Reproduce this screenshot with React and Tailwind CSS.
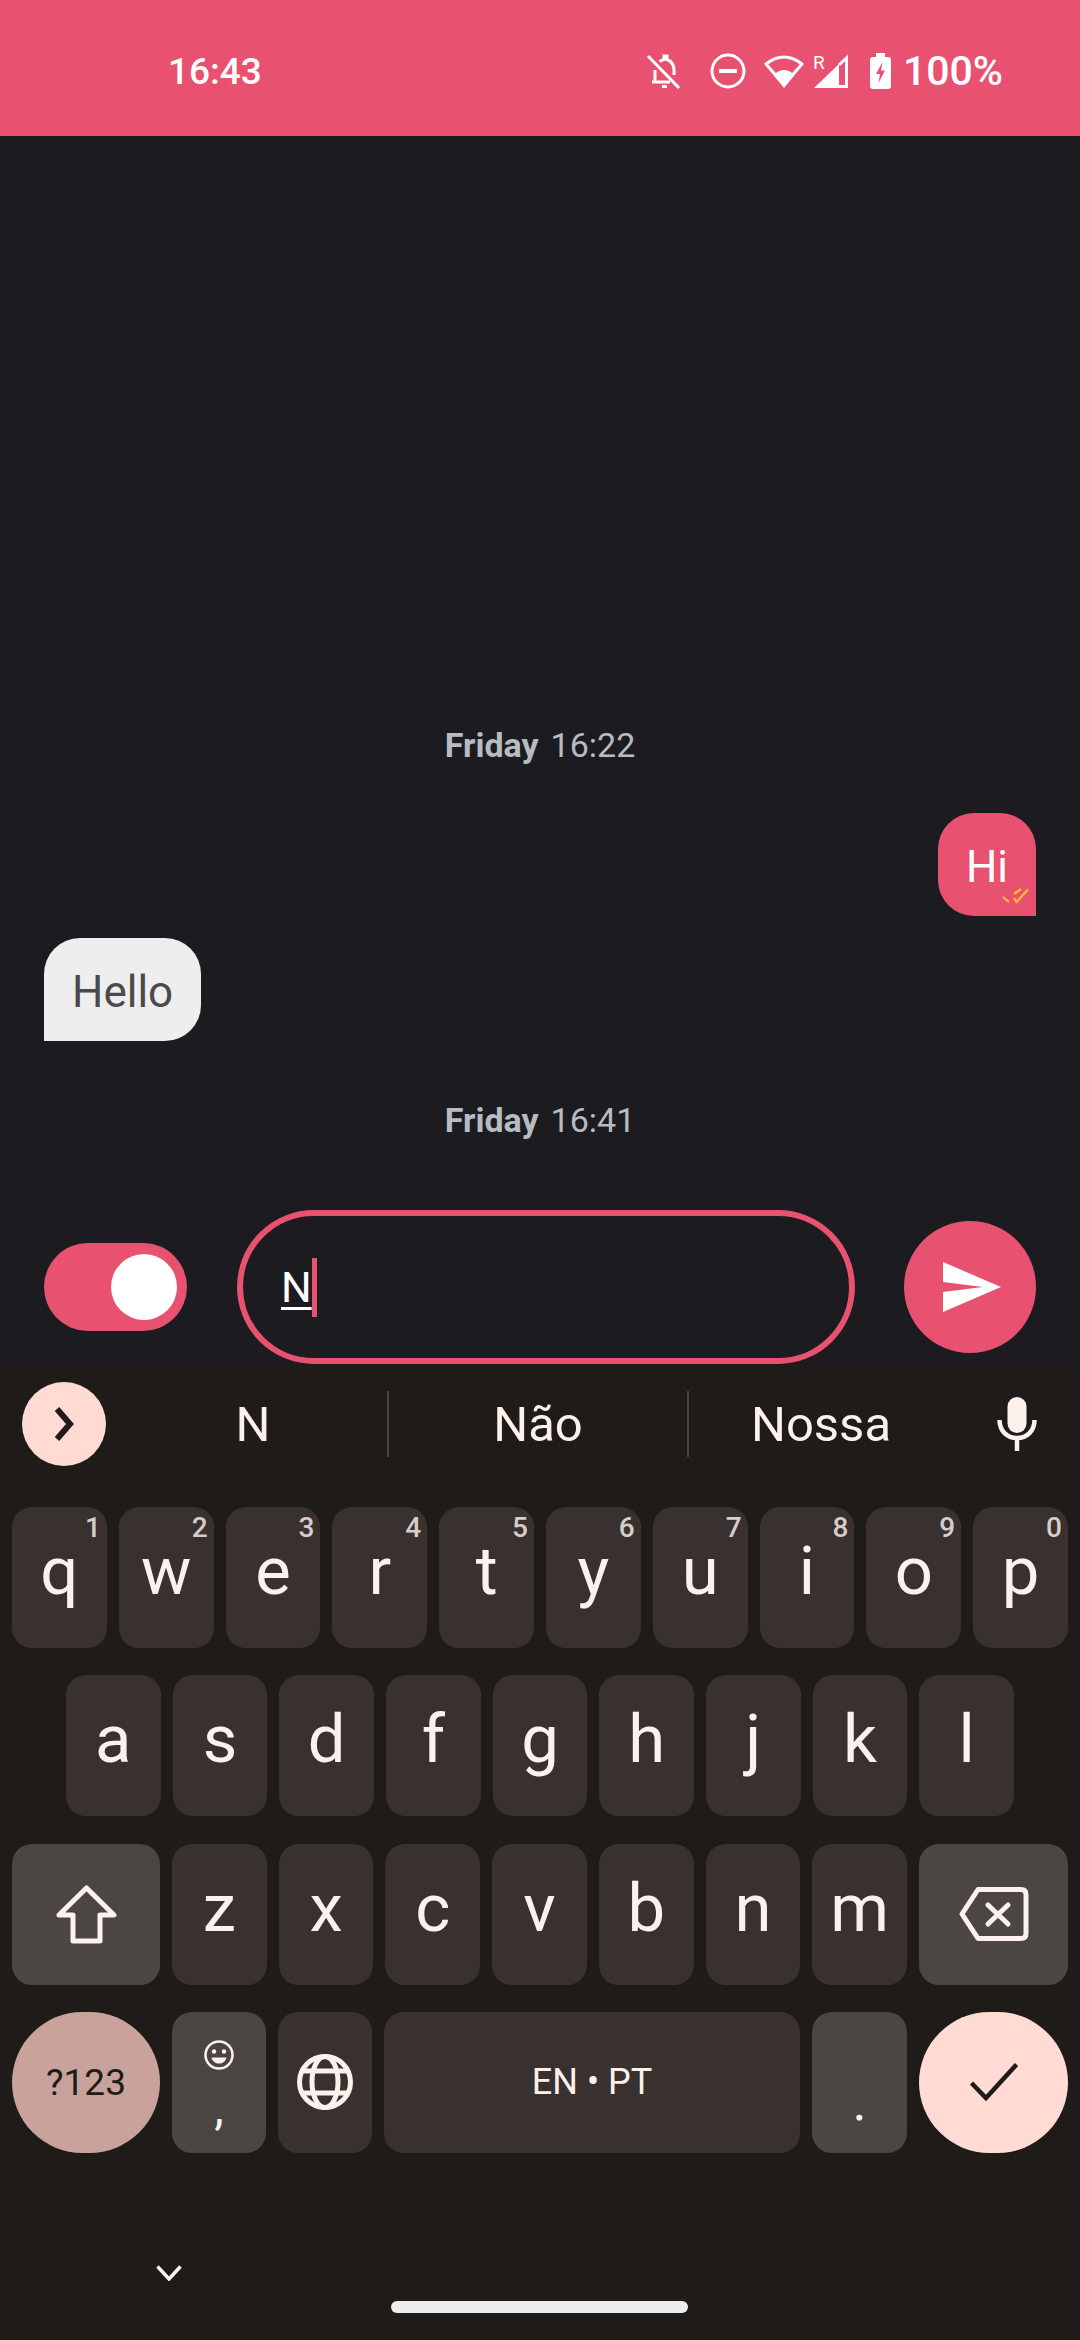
import React from "react";

const ROW_ONE = [["q", "1"], ["w", "2"], ["e", "3"], ["r", "4"], ["t", "5"], ["y", "6"], ["u", "7"], ["i", "8"], ["o", "9"], ["p", "0"]];
const ROW_TWO = ["a", "s", "d", "f", "g", "h", "j", "k", "l"];
const ROW_THREE = ["z", "x", "c", "v", "b", "n", "m"];

const Key = ({ label, digit }) => (
  <div className="relative flex-1 h-full rounded-[20px] bg-[#383130] flex items-center justify-center pb-[12px] text-[67px] font-normal leading-none text-[#fdf1ec]">
    {label}
    {digit && <span className="absolute top-[7px] right-[6px] text-[28px] font-medium leading-[28px] text-[#d6cdca]">{digit}</span>}
  </div>
);

const BellOff = () => (
  <svg width="35" height="35" viewBox="0 0 35 35" fill="none" stroke="white" strokeWidth="3">
    <path d="M2 2 L33 34" />
    <path d="M6 28 H24" />
    <path d="M9 28 V16" />
    <path d="M28 21 V16 C28 11 25 7 21 5.5 V2 H18 V5.5 C16 6 15 6.5 13.5 7.5" />
    <path d="M16 32.5 H21" />
  </svg>
);

const Dnd = () => (
  <svg width="36" height="36" viewBox="0 0 36 36" fill="none" stroke="white" strokeWidth="3" className="ml-[29px]">
    <circle cx="18" cy="18" r="16" />
    <path d="M9 18 H27" strokeWidth="4" />
  </svg>
);

const Wifi = () => (
  <svg width="42" height="36" viewBox="0 0 42 36" fill="none" stroke="white" strokeWidth="3" className="ml-[17px]">
    <path d="M3 11 Q21 -3 39 11 L21 32 Z" strokeLinejoin="round" />
    <path d="M10.5 22 Q21 12 31.5 22 L21 35 Z" fill="white" stroke="none" />
  </svg>
);

const Signal = () => (
  <div className="relative ml-[9px]">
    <svg width="35" height="35" viewBox="0 0 35 35" fill="none" className="block">
      <path d="M0 34 L25 10 V34 Z" fill="white" />
      <path d="M25 32.5 H32.5 V4 L25 11" stroke="white" strokeWidth="3" />
    </svg>
    <span className="absolute -left-[1px] top-[-1px] text-[19px] leading-[19px] text-white">R</span>
  </div>
);

const Battery = () => (
  <svg width="21" height="36" viewBox="0 0 21 36" className="ml-[21px]">
    <path d="M6 0 H15 V4 H18 Q21 4 21 7 V33 Q21 36 18 36 H3 Q0 36 0 33 V7 Q0 4 3 4 H6 Z" fill="white" />
    <path d="M12.5 9 L6 21 H10 L8.5 30 L15 17.5 H11 Z" fill="#e95170" />
  </svg>
);

const Ticks = () => (
  <svg width="27" height="16" viewBox="0 0 27 16" fill="none" stroke="#fbc02d" strokeWidth="2.2" className="absolute right-[7px] bottom-[12px]">
    <path d="M1 9 L7 14" />
    <path d="M12 10 L14.5 14 L26 1.5" />
    <path d="M12 6 L19 1" />
  </svg>
);

export default function App() {
  return (
    <div className="w-[1080px] h-[2340px] flex flex-col bg-[#1c1c20] overflow-hidden font-['Roboto',sans-serif]">
      {/* status bar */}
      <div className="h-[136px] shrink-0 bg-[#e95170] flex items-center pl-[168px] pr-[77px] pt-[6px] text-white">
        <span className="text-[37px] font-medium leading-none">16:43</span>
        <div className="ml-auto flex items-center">
          <BellOff />
          <Dnd />
          <Wifi />
          <Signal />
          <Battery />
          <span className="ml-[12px] text-[41px] font-medium leading-none">100%</span>
        </div>
      </div>

      {/* messages */}
      <div className="flex-1 flex flex-col justify-end pb-[70px] px-[44px]">
        <div className="h-[40px] flex items-center justify-center text-[34px] text-[#b6bcc2] leading-none">
          <span className="font-bold mr-[12px]">Friday</span>
          <span>16:22</span>
        </div>
        <div className="relative mt-[48px] self-end h-[103px] px-[28px] pt-[5px] flex items-center rounded-[36px] rounded-br-none bg-[#e95170] text-[44px] text-white">
          Hi
          <Ticks />
        </div>
        <div className="mt-[22px] self-start h-[103px] px-[28px] pt-[5px] flex items-center rounded-[36px] rounded-bl-none bg-[#eeeeee] text-[44px] text-[#4a4a4a]">
          Hello
        </div>
        <div className="mt-[59px] h-[40px] flex items-center justify-center text-[34px] text-[#b6bcc2] leading-none">
          <span className="font-bold mr-[12px]">Friday</span>
          <span>16:41</span>
        </div>
      </div>

      {/* input row */}
      <div className="h-[154px] shrink-0 flex items-center pl-[44px]">
        <div className="w-[143px] h-[88px] rounded-full bg-[#e95170] flex items-center justify-end pr-[10px]">
          <div className="w-[66px] h-[66px] rounded-full bg-white" />
        </div>
        <div className="ml-[50px] w-[618px] h-[154px] rounded-full border-[6px] border-[#e95170] flex items-center pl-[38px] text-[43px] text-white">
          <span className="underline decoration-[3px] underline-offset-[5px]">N</span>
          <span className="w-[5px] h-[59px] bg-[#e95170]" />
        </div>
        <div className="ml-[49px] w-[132px] h-[132px] rounded-full bg-[#e95170] flex items-center justify-center pl-[4px]">
          <svg width="58" height="50" viewBox="0 0 58 50">
            <path d="M0 0 L58 25 L0 50 V30 L40 25 L0 20 Z" fill="white" />
          </svg>
        </div>
      </div>

      {/* keyboard */}
      <div className="h-[976px] shrink-0 bg-[#1f1b18] text-[#fdf1ec]">
        <div className="h-[143px] flex items-start pt-[18px] pl-[22px]">
          <div className="w-[84px] h-[84px] rounded-full bg-[#ffdbd3] flex items-center justify-center">
            <svg width="20" height="34" viewBox="0 0 20 34" fill="none" stroke="#1f1b18" strokeWidth="6">
              <path d="M3 2 L16 17 L3 32" />
            </svg>
          </div>
          <div className="ml-[13px] w-[268px] h-[84px] flex items-center justify-center text-[49px] leading-none">N</div>
          <div className="w-[2px] h-[66px] mt-[9px] bg-[#484442]" />
          <div className="w-[298px] h-[84px] flex items-center justify-center text-[49px] leading-none">Não</div>
          <div className="w-[2px] h-[66px] mt-[9px] bg-[#484442]" />
          <div className="w-[264px] h-[84px] flex items-center justify-center text-[49px] leading-none">Nossa</div>
          <svg width="40" height="54" viewBox="0 0 40 54" fill="none" className="ml-[44px] mt-[15px]">
            <rect x="10.5" y="0" width="19" height="36" rx="9.5" fill="#fdf1ec" />
            <path d="M2.5 23 C2.5 34 10 41 20 41 C30 41 37.5 34 37.5 23" stroke="#fdf1ec" strokeWidth="4.5" />
            <path d="M20 40 V54" stroke="#fdf1ec" strokeWidth="4.5" />
          </svg>
        </div>

        <div className="flex flex-col gap-[27.3px]">
          <div className="h-[141px] flex gap-[12px] px-[12px]">
            {ROW_ONE.map(([label, digit]) => (
              <Key key={label} label={label} digit={digit} />
            ))}
          </div>
          <div className="h-[141px] flex gap-[12px] px-[66px]">
            {ROW_TWO.map((label) => (
              <Key key={label} label={label} />
            ))}
          </div>
          <div className="h-[141px] flex gap-[12px] px-[12px]">
            <div className="w-[148px] rounded-[20px] bg-[#4b4543] flex items-center justify-center">
              <svg width="61" height="59" viewBox="0 0 61 59" fill="none" stroke="#fdf1ec" strokeWidth="5" strokeLinejoin="round">
                <path d="M30.5 3 L58 30 H44 V56 H17 V30 H3 Z" />
              </svg>
            </div>
            {ROW_THREE.map((label) => (
              <Key key={label} label={label} />
            ))}
            <div className="w-[149px] rounded-[20px] bg-[#4b4543] flex items-center justify-center">
              <svg width="70" height="54" viewBox="0 0 70 54" fill="none" stroke="#fdf1ec" strokeWidth="5" strokeLinejoin="round" strokeLinecap="round">
                <path d="M3 27 L19 2.5 H62 Q67 2.5 67 7.5 V46.5 Q67 51.5 62 51.5 H19 Z" />
                <path d="M29 18 L49 37 M49 18 L29 37" />
              </svg>
            </div>
          </div>
          <div className="h-[141px] flex gap-[12px] px-[12px]">
            <div className="w-[148px] rounded-full bg-[#c9a39b] flex items-center justify-center text-[37px] font-normal leading-none text-[#1f1b18]">?123</div>
            <div className="w-[94px] rounded-[20px] bg-[#4b4543] flex flex-col items-center pt-[28px]">
              <svg width="30" height="30" viewBox="0 0 30 30" fill="none">
                <circle cx="15" cy="15" r="13.5" stroke="#fdf1ec" strokeWidth="2.5" />
                <circle cx="10" cy="11.5" r="2.2" fill="#fdf1ec" />
                <circle cx="20" cy="11.5" r="2.2" fill="#fdf1ec" />
                <path d="M7.5 17.5 H22.5 C21.5 21.5 18.5 23.5 15 23.5 C11.5 23.5 8.5 21.5 7.5 17.5 Z" fill="#fdf1ec" />
              </svg>
              <span className="mt-[14px] text-[48px] leading-[48px]">,</span>
            </div>
            <div className="w-[94px] rounded-[20px] bg-[#383130] flex items-center justify-center">
              <svg width="56" height="56" viewBox="0 0 56 56" fill="none" stroke="#fdf1ec" strokeWidth="5">
                <circle cx="28" cy="28" r="25.5" />
                <ellipse cx="28" cy="28" rx="13" ry="25.5" />
                <path d="M5 17 H51 M5 39 H51" />
              </svg>
            </div>
            <div className="flex-1 rounded-[20px] bg-[#383130] flex items-center justify-center text-[36px] leading-none">EN • PT</div>
            <div className="w-[95px] rounded-[20px] bg-[#4b4543] flex items-center justify-center pt-[40px] text-[54px] leading-[54px]">.</div>
            <div className="w-[149px] rounded-full bg-[#ffdbd3] flex items-center justify-center">
              <svg width="48" height="38" viewBox="0 0 48 38" fill="none" stroke="#1f1b18" strokeWidth="4.5">
                <path d="M1.5 20 L16 35 L46.5 1.5" />
              </svg>
            </div>
          </div>
        </div>

        {/* nav */}
        <div className="mt-[112px] pl-[156px]">
          <svg width="26" height="16" viewBox="0 0 26 16" fill="none" stroke="#fdf1ec" strokeWidth="3.5" className="block">
            <path d="M1.5 1.5 L13 14 L24.5 1.5" />
          </svg>
        </div>
        <div className="mt-[20px] ml-[391px] w-[297px] h-[12px] rounded-full bg-[#eeeeee]" />
      </div>
    </div>
  );
}
